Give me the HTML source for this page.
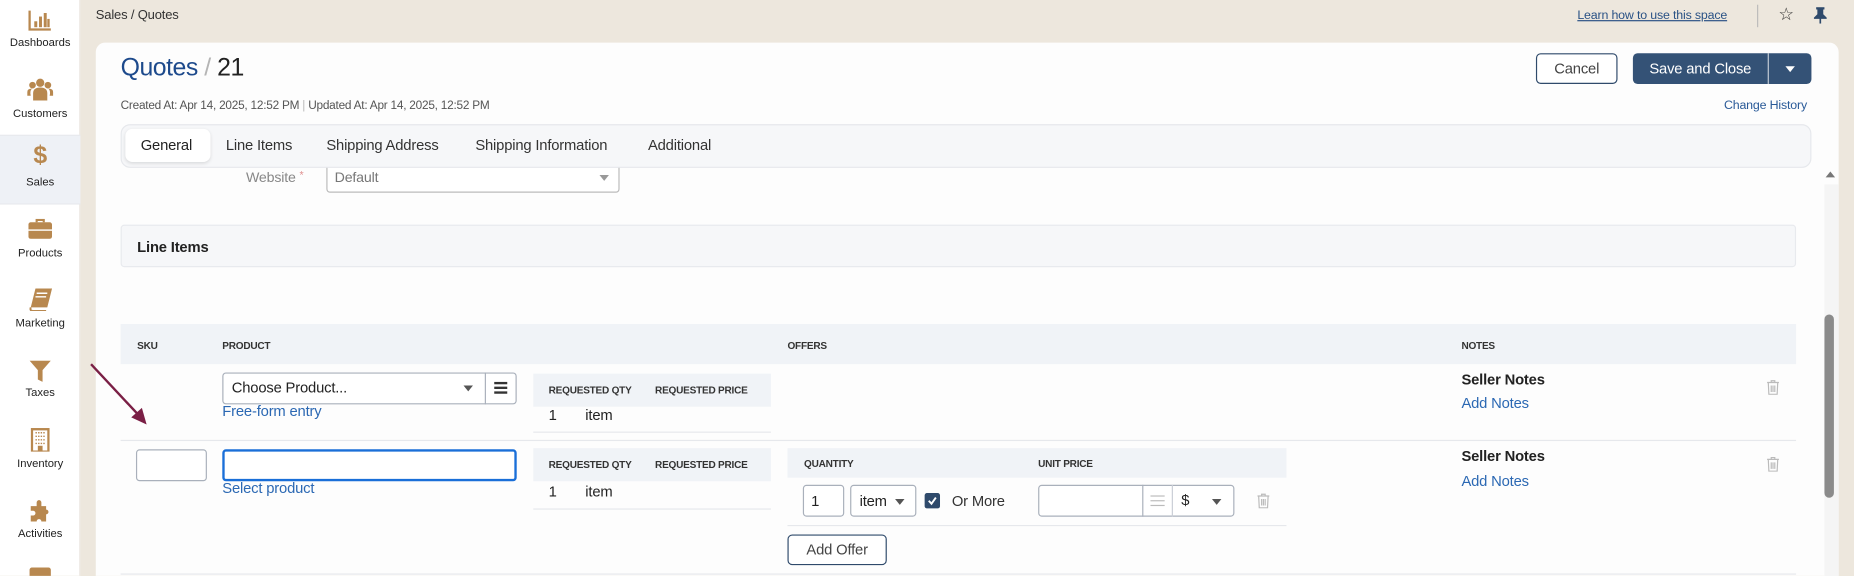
<!DOCTYPE html>
<html><head><meta charset="utf-8"><style>
*{box-sizing:border-box;margin:0;padding:0}
html,body{width:1854px;height:576px;overflow:hidden;background:#ede7dd;font-family:"Liberation Sans",sans-serif;color:#222}
#w{position:absolute;left:0;top:0;width:1568px;height:487px;transform:scale(1.18240);transform-origin:0 0;background:#ede7dd;overflow:hidden;letter-spacing:-.15px}
.a{position:absolute;white-space:nowrap}
.sb{position:absolute;left:0;top:0;width:68px;height:487px;background:#fff;border-right:1px solid #ebe7e1}
.si{position:absolute;left:0;width:68px;text-align:center;font-size:9.5px;color:#222;letter-spacing:0}
.card{position:absolute;left:81px;top:36px;width:1474px;height:460px;background:#fdfdfd;border-radius:8px}
.th{font-size:8.5px;font-weight:bold;color:#333;letter-spacing:-.2px}
.blue{color:#2b68b3}
.inp{position:absolute;border:1px solid #a9b0bb;border-radius:3px;background:#fff}
.btn{position:absolute;border:1px solid #2f4a6b;border-radius:4px;background:#fff;font-size:12.5px;color:#444;text-align:center}
.car{position:absolute;width:0;height:0;border-left:4px solid transparent;border-right:4px solid transparent;border-top:5px solid #555}
</style></head><body><div id="w">
<div class="sb">
<div class="a" style="left:0;top:114px;width:68px;height:59px;background:#eef1f6;border-top:1px solid #e8eaee;border-bottom:1px solid #e8eaee"></div>
<svg class="a" style="left:24px;top:8px" width="20" height="18" viewBox="0 0 20 18"><path d="M1 1V17H19" stroke="#b8884f" stroke-width="2" fill="none"/><rect x="5" y="10" width="2.5" height="5" fill="#b8884f"/><rect x="9" y="6" width="2.5" height="9" fill="#b8884f"/><rect x="13" y="3" width="2.5" height="12" fill="#b8884f"/><rect x="16" y="8" width="2" height="7" fill="#b8884f"/></svg>
<div class="si" style="top:31px">Dashboards</div>
<svg class="a" style="left:23px;top:65px" width="22" height="20" viewBox="0 0 22 20"><circle cx="11" cy="5" r="3.5" fill="#b8884f"/><circle cx="4.5" cy="7" r="2.8" fill="#b8884f"/><circle cx="17.5" cy="7" r="2.8" fill="#b8884f"/><path d="M5 20V14Q5 9 11 9Q17 9 17 14V20Z" fill="#b8884f"/><path d="M0 16V13Q0 10 4 10Q2 12 3 16Z M22 16V13Q22 10 18 10Q20 12 19 16Z" fill="#b8884f"/></svg>
<div class="si" style="top:91px">Customers</div>
<div class="a" style="left:0;width:68px;top:120px;text-align:center;font-size:21px;font-weight:bold;color:#b8884f">$</div>
<div class="si" style="top:149px">Sales</div>
<svg class="a" style="left:24px;top:185px" width="20" height="17" viewBox="0 0 20 17"><path d="M7 3V1H13V3" stroke="#b8884f" stroke-width="1.8" fill="none"/><rect x="0" y="3" width="20" height="14" rx="2" fill="#b8884f"/><rect x="0" y="9" width="20" height="1.2" fill="#fff"/></svg>
<div class="si" style="top:209px">Products</div>
<svg class="a" style="left:25px;top:244px" width="19" height="19" viewBox="0 0 19 19"><path d="M5 0H19L15 16H1Z" fill="#b8884f"/><path d="M1 16Q0 19 3 19H14" stroke="#b8884f" stroke-width="1.6" fill="none"/><path d="M6 4H15M5 7H14" stroke="#fff" stroke-width="1.2"/></svg>
<div class="si" style="top:268px">Marketing</div>
<svg class="a" style="left:25px;top:305px" width="18" height="18" viewBox="0 0 18 18"><path d="M0 0H18L11 8V18L7 16V8Z" fill="#b8884f"/></svg>
<div class="si" style="top:327px">Taxes</div>
<svg class="a" style="left:26px;top:362px" width="16" height="20" viewBox="0 0 16 20"><rect x="1" y="1" width="14" height="19" fill="none" stroke="#b8884f" stroke-width="2"/><path d="M4 4H12M4 7H12M4 10H12M4 13H12" stroke="#b8884f" stroke-width="1.2" stroke-dasharray="1.2 1"/><rect x="6" y="15" width="4" height="5" fill="#b8884f"/></svg>
<div class="si" style="top:387px">Inventory</div>
<svg class="a" style="left:24px;top:422px" width="20" height="19" viewBox="0 0 20 19"><path d="M2 6H7V3A2 2 0 0 1 11 3V6H15V9A2 2 0 0 1 15 13V19H11A2 2 0 0 0 7 19H2V14H4A2 2 0 0 0 4 10H2Z" fill="#b8884f"/></svg>
<div class="si" style="top:446px">Activities</div>
<div class="a" style="left:25px;top:480px;width:18px;height:10px;background:#b8884f;border-radius:2px"></div>
</div>
<div class="a" style="left:81px;top:7px;font-size:11px;color:#333">Sales / Quotes</div>
<div class="a" style="left:1334px;top:7px;font-size:10.5px;color:#2a5285;text-decoration:underline">Learn how to use this space</div>
<div class="a" style="left:1486px;top:4px;width:1px;height:19px;background:#bbb"></div>
<div class="a" style="left:1504px;top:3px;font-size:15px;color:#333">☆</div>
<svg class="a" style="left:1534px;top:6px" width="11" height="14" viewBox="0 0 11 14"><path d="M2 0H9V2H8V6L11 9V10H6.2V14H4.8V10H0V9L3 6V2H2Z" fill="#2f4a6b"/></svg>
<div class="card">
<div class="a" style="left:1462px;top:120px;width:12px;height:340px;background:#f5f5f5"></div>
<div class="a" style="left:1463px;top:109px;width:0;height:0;border-left:4px solid transparent;border-right:4px solid transparent;border-bottom:5px solid #777"></div>
<div class="a" style="left:1462px;top:230px;width:8px;height:155px;background:#8b8b8b;border-radius:4px"></div>
</div>
<div class="a" style="left:102px;top:46px;font-size:21px;color:#1d4a8c;letter-spacing:-.4px">Quotes <span style="color:#b5b5b5">/</span> <span style="color:#222">21</span></div>
<div class="a" style="left:102px;top:84px;font-size:10px;color:#555;letter-spacing:-.2px">Created At: Apr 14, 2025, 12:52 PM <span style="color:#bbb">|</span> Updated At: Apr 14, 2025, 12:52 PM</div>
<div class="btn" style="left:1299px;top:45px;width:69px;height:26px;line-height:24px">Cancel</div>
<div class="a" style="left:1381px;top:45px;width:151px;height:26px;background:#345276;border-radius:4px"></div>
<div class="a" style="left:1381px;top:45px;width:114px;height:26px;line-height:26px;text-align:center;color:#fff;font-size:12.5px">Save and Close</div>
<div class="a" style="left:1495px;top:45px;width:1px;height:26px;background:#fff;opacity:.7"></div>
<div class="car" style="left:1510px;top:56px;border-top-color:#fff"></div>
<div class="a blue" style="left:1458px;top:83px;font-size:10.5px;color:#2a5a98">Change History</div>
<div class="a" style="left:208px;top:143px;font-size:12px;color:#888">Website <span style="color:#e09090;font-size:9px;vertical-align:top">*</span></div>
<div class="inp" style="left:276px;top:130px;width:248px;height:33px;border-color:#bbb"></div>
<div class="a" style="left:283px;top:143px;font-size:12px;color:#777">Default</div>
<div class="car" style="left:507px;top:148px;border-top-color:#999"></div>
<div class="a" style="left:102px;top:105px;width:1430px;height:37px;background:#f6f7f9;border:1px solid #e6e8ec;border-radius:8px"></div>
<div class="a" style="left:106px;top:109px;width:72px;height:28px;background:#fff;border-radius:6px;box-shadow:0 1px 3px rgba(0,0,0,.12)"></div>
<div class="a" style="left:119px;top:116px;font-size:12.5px;color:#222">General</div>
<div class="a" style="left:191px;top:116px;font-size:12.5px;color:#333">Line Items</div>
<div class="a" style="left:276px;top:116px;font-size:12.5px;color:#333">Shipping Address</div>
<div class="a" style="left:402px;top:116px;font-size:12.5px;color:#333">Shipping Information</div>
<div class="a" style="left:548px;top:116px;font-size:12.5px;color:#333">Additional</div>
<div class="a" style="left:102px;top:190px;width:1417px;height:36px;background:#f6f7f9;border:1px solid #e8eaee;border-radius:3px"></div>
<div class="a" style="left:116px;top:202px;font-size:12.5px;font-weight:bold;color:#222">Line Items</div>
<div class="a" style="left:102px;top:274px;width:1417px;height:34px;background:#f0f3f7"></div>
<div class="a th" style="left:116px;top:287px">SKU</div>
<div class="a th" style="left:188px;top:287px">PRODUCT</div>
<div class="a th" style="left:666px;top:287px">OFFERS</div>
<div class="a th" style="left:1236px;top:287px">NOTES</div>
<div class="inp" style="left:188px;top:315px;width:249px;height:27px"></div>
<div class="a" style="left:410px;top:315px;width:1px;height:27px;background:#a9b0bb"></div>
<div class="a" style="left:196px;top:321px;font-size:12.5px;color:#222">Choose Product...</div>
<div class="car" style="left:392px;top:326px"></div>
<div class="a" style="left:418px;top:323px;width:11px;height:2px;background:#333;box-shadow:0 4px 0 #333,0 8px 0 #333"></div>
<div class="a blue" style="left:188px;top:341px;font-size:12.5px">Free-form entry</div>
<div class="a" style="left:451px;top:316px;width:201px;height:28px;background:#f0f3f7"></div>
<div class="a th" style="left:464px;top:325px">REQUESTED QTY</div>
<div class="a th" style="left:554px;top:325px">REQUESTED PRICE</div>
<div class="a" style="left:464px;top:344px;font-size:12.5px">1</div>
<div class="a" style="left:495px;top:344px;font-size:12.5px">item</div>
<div class="a" style="left:451px;top:365px;width:201px;height:1px;background:#e6e8ec"></div>
<div class="a" style="left:1236px;top:314px;font-size:12.5px;font-weight:bold">Seller Notes</div>
<div class="a blue" style="left:1236px;top:334px;font-size:12.5px">Add Notes</div>
<svg class="a" style="left:1494px;top:321px" width="11" height="13" viewBox="0 0 11 13"><path d="M0.5 2.5H10.5M4 2.5V1H7V2.5M1.5 2.5L2 12.5H9L9.5 2.5M4 5V10.5M5.5 5V10.5M7 5V10.5" stroke="#bbb" fill="none"/></svg>
<div class="a" style="left:102px;top:372px;width:1417px;height:1px;background:#e6e8ec"></div>
<div class="inp" style="left:115px;top:380px;width:60px;height:27px"></div>
<div class="a" style="left:188px;top:380px;width:249px;height:27px;border:2px solid #1a6fd8;border-radius:3px;background:#fff"></div>
<div class="a blue" style="left:188px;top:406px;font-size:12.5px">Select product</div>
<div class="a" style="left:451px;top:379px;width:201px;height:28px;background:#f0f3f7"></div>
<div class="a th" style="left:464px;top:388px">REQUESTED QTY</div>
<div class="a th" style="left:554px;top:388px">REQUESTED PRICE</div>
<div class="a" style="left:464px;top:409px;font-size:12.5px">1</div>
<div class="a" style="left:495px;top:409px;font-size:12.5px">item</div>
<div class="a" style="left:451px;top:430px;width:201px;height:1px;background:#e6e8ec"></div>
<div class="a" style="left:666px;top:379px;width:422px;height:25px;background:#f0f3f7"></div>
<div class="a th" style="left:680px;top:387px">QUANTITY</div>
<div class="a th" style="left:878px;top:387px">UNIT PRICE</div>
<div class="inp" style="left:679px;top:410px;width:35px;height:27px"></div>
<div class="a" style="left:686px;top:417px;font-size:12.5px">1</div>
<div class="inp" style="left:719px;top:410px;width:56px;height:27px"></div>
<div class="a" style="left:727px;top:417px;font-size:12.5px">item</div>
<div class="car" style="left:757px;top:422px"></div>
<div class="a" style="left:782px;top:417px;width:13px;height:13px;background:#2f4a6b;border-radius:2px"></div>
<svg class="a" style="left:784px;top:419px" width="9" height="9" viewBox="0 0 9 9"><path d="M1.5 4.5L3.8 7L7.5 1.8" stroke="#fff" stroke-width="1.6" fill="none"/></svg>
<div class="a" style="left:805px;top:417px;font-size:12.5px;color:#333">Or More</div>
<div class="inp" style="left:878px;top:410px;width:166px;height:27px"></div>
<div class="a" style="left:966px;top:410px;width:1px;height:27px;background:#a9b0bb"></div>
<div class="a" style="left:991px;top:410px;width:1px;height:27px;background:#c9ced6"></div>
<div class="a" style="left:973px;top:419px;width:12px;height:1px;background:#bbb;box-shadow:0 4px 0 #bbb,0 8px 0 #bbb"></div>
<div class="a" style="left:999px;top:416px;font-size:12.5px">$</div>
<div class="car" style="left:1025px;top:422px"></div>
<svg class="a" style="left:1063px;top:417px" width="11" height="13" viewBox="0 0 11 13"><path d="M0.5 2.5H10.5M4 2.5V1H7V2.5M1.5 2.5L2 12.5H9L9.5 2.5M4 5V10.5M5.5 5V10.5M7 5V10.5" stroke="#bbb" fill="none"/></svg>
<div class="a" style="left:666px;top:444px;width:422px;height:1px;background:#e6e8ec"></div>
<div class="btn" style="left:666px;top:452px;width:84px;height:26px;line-height:24px">Add Offer</div>
<div class="a" style="left:1236px;top:379px;font-size:12.5px;font-weight:bold">Seller Notes</div>
<div class="a blue" style="left:1236px;top:400px;font-size:12.5px">Add Notes</div>
<svg class="a" style="left:1494px;top:386px" width="11" height="13" viewBox="0 0 11 13"><path d="M0.5 2.5H10.5M4 2.5V1H7V2.5M1.5 2.5L2 12.5H9L9.5 2.5M4 5V10.5M5.5 5V10.5M7 5V10.5" stroke="#bbb" fill="none"/></svg>
<div class="a" style="left:102px;top:485px;width:1417px;height:1px;background:#e6e8ec"></div>
<svg class="a" style="left:70px;top:300px" width="60" height="65" viewBox="0 0 60 65"><path d="M7 8L50 54" stroke="#7a1f45" stroke-width="2"/><path d="M54 59L41 53L50 45Z" fill="#7a1f45"/></svg>
</div></body></html>
